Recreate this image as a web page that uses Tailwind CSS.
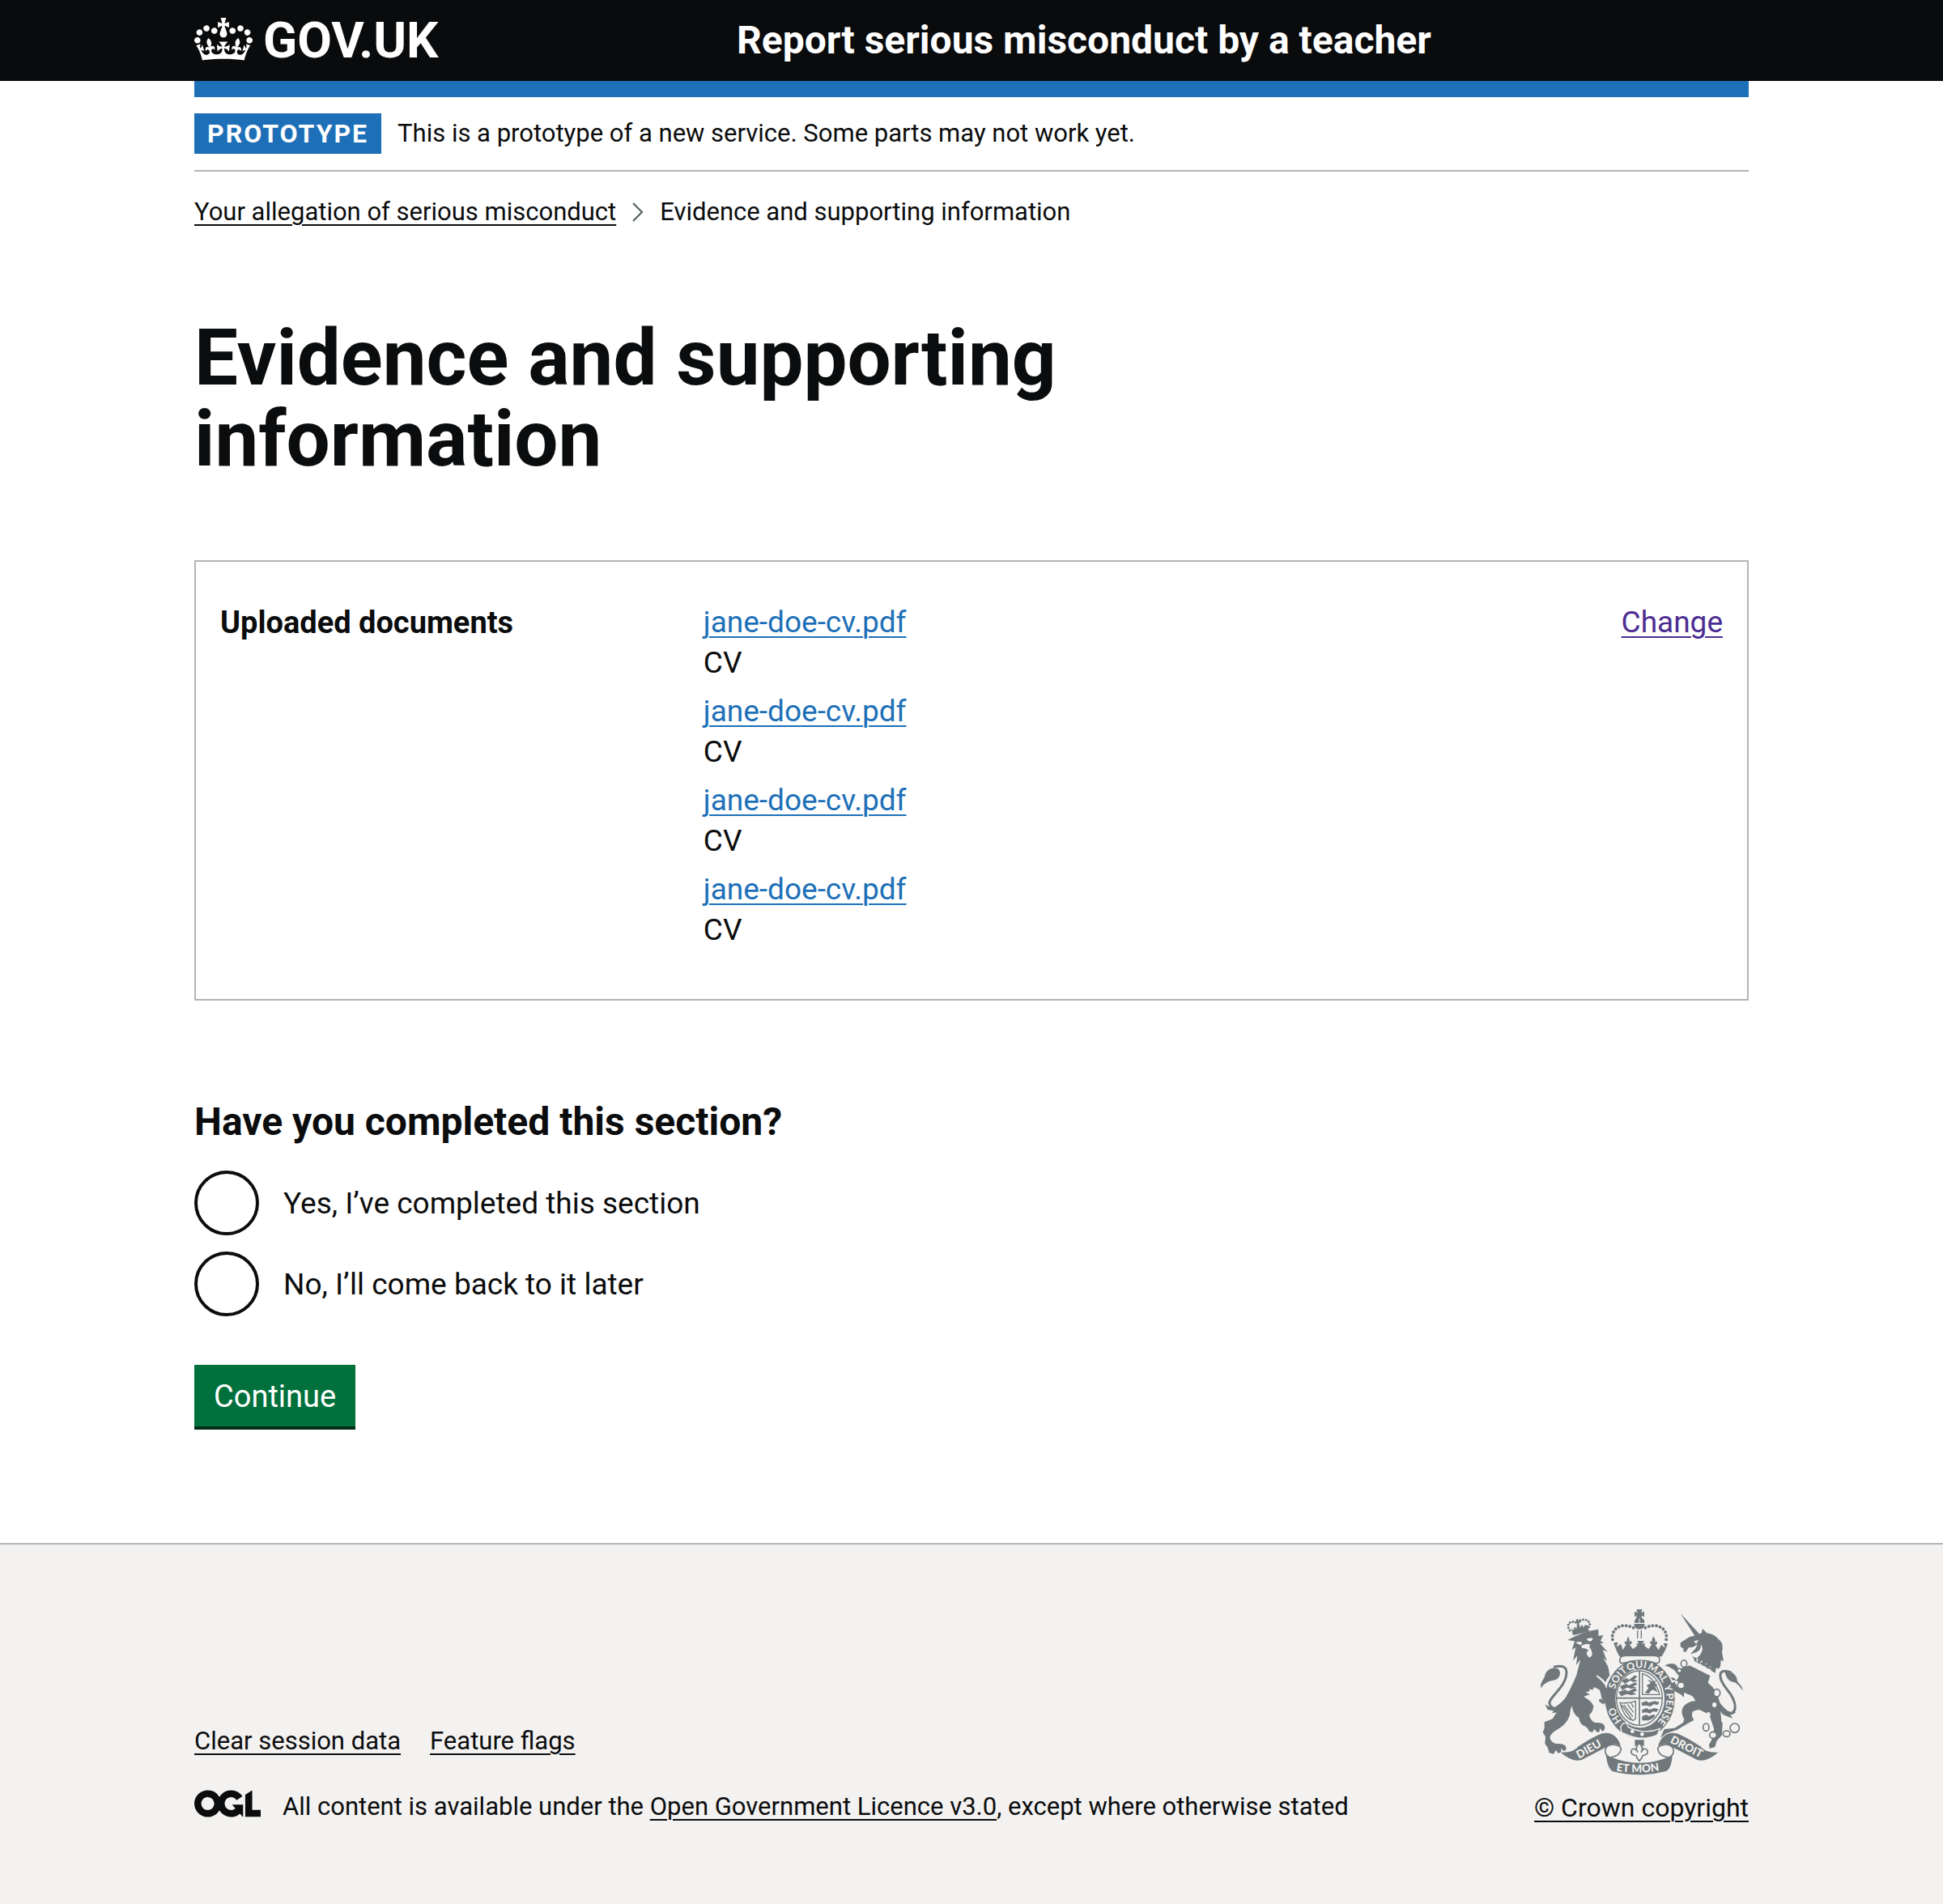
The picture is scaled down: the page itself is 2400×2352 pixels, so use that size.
<!DOCTYPE html>
<html lang="en">
<head>
<meta charset="utf-8">
<meta name="viewport" content="width=device-width, initial-scale=1">
<title>Evidence and supporting information</title>
<script src="https://cdn.jsdelivr.net/npm/@tailwindcss/browser@4"></script>
</head>
<body class="flex min-h-screen flex-col bg-white font-[Roboto,Arial,sans-serif] text-[31px] leading-[40px] text-[#0b0c0d]">

<header class="bg-[#0a0b0d] text-white">
  <div class="mx-auto flex h-[100px] w-full max-w-[1920px] items-center">
    <div class="w-1/3 shrink-0">
      <a href="#" class="flex w-fit items-center gap-[13px] text-[62px] leading-[60px] font-bold" aria-label="GOV.UK">
        <svg class="mb-1 h-[53px] w-[72px]" viewBox="0 0 132 97" fill="currentColor" aria-hidden="true">
          <path fill-rule="evenodd" d="M25 30.2c3.5 1.5 7.7-.2 9.1-3.7 1.5-3.6-.2-7.8-3.9-9.2-3.6-1.4-7.6.3-9.1 3.9-1.4 3.5.3 7.5 3.9 9zM9 39.5c3.6 1.5 7.8-.2 9.2-3.7 1.5-3.6-.2-7.8-3.9-9.1-3.6-1.5-7.6.2-9.1 3.8-1.4 3.5.3 7.5 3.8 9zM4.4 57.2c3.5 1.5 7.7-.2 9.1-3.8 1.5-3.6-.2-7.7-3.9-9.1-3.5-1.5-7.6.3-9.1 3.8-1.4 3.5.3 7.6 3.9 9.1zm38.3-21.4c3.5 1.5 7.7-.2 9.1-3.8 1.5-3.6-.2-7.7-3.9-9.1-3.6-1.5-7.6.3-9.1 3.8-1.3 3.6.4 7.7 3.9 9.1zm64.4-5.6c-3.6 1.5-7.8-.2-9.1-3.7-1.5-3.6.2-7.8 3.8-9.2 3.6-1.4 7.7.3 9.2 3.9 1.3 3.5-.4 7.5-3.9 9zm15.9 9.3c-3.6 1.5-7.7-.2-9.1-3.7-1.5-3.6.2-7.8 3.7-9.1 3.6-1.5 7.7.2 9.2 3.8 1.5 3.5-.3 7.5-3.8 9zm4.7 17.7c-3.6 1.5-7.8-.2-9.2-3.8-1.5-3.6.2-7.7 3.9-9.1 3.6-1.5 7.7.3 9.2 3.8 1.3 3.5-.4 7.6-3.9 9.1zM89.3 35.8c-3.6 1.5-7.8-.2-9.2-3.8-1.4-3.6.2-7.7 3.9-9.1 3.6-1.5 7.7.3 9.2 3.8 1.4 3.6-.3 7.7-3.9 9.1zM69.7 17.7l8.9 4.7V9.3l-8.9 2.8c-.2-.3-.5-.6-.9-.9L72.4 0H59.6l3.5 11.2c-.3.3-.6.5-.9.9l-8.8-2.8v13.1l8.8-4.7c.3.3.6.7.9.9l-5 15.4v.1c-.2.8-.4 1.6-.4 2.4 0 4.1 3.1 7.5 7 8.1h.2c.3 0 .7.1 1 .1.4 0 .7 0 1-.1h.2c4-.6 7.1-4.1 7.1-8.1 0-.8-.1-1.7-.4-2.4V34l-5.1-15.4c.4-.2.7-.6 1-.9zM66 92.8c16.9 0 32.8 1.1 47.1 3.2 4-16.9 8.9-26.7 14-33.5l-9.6-3.4c1 4.9 1.1 7.2 0 10.2-1.5-1.4-3-4.3-4.2-8.7L108.6 76c2.8-2 5-3.2 7.5-3.3-4.4 9.4-10 11.9-13.6 11.2-4.3-.8-6.3-4.6-5.6-7.9 1-4.7 5.7-5.9 8-.5 4.3-8.7-3-11.4-7.6-8.8 7.1-7.2 7.9-13.5 2.1-21.1-8 6.1-8.1 12.3-4.5 20.8-4.7-5.4-12.1-2.5-9.5 6.2 3.4-5.2 7.9-2 7.2 3.1-.6 4.3-6.4 7.8-13.5 7.2-10.3-.9-10.9-8-11.2-13.8 2.5-.5 7.1 1.8 11 7.3L80.2 60c-4.1 4.4-8 5.3-12.3 5.4 1.4-4.4 8-11.6 8-11.6H55.5s6.4 7.2 7.9 11.6c-4.2-.1-8-1-12.3-5.4l1.4 16.4c3.9-5.5 8.5-7.7 10.9-7.3-.3 5.8-.9 12.8-11.1 13.8-7.2.6-12.9-2.9-13.5-7.2-.7-5 3.8-8.3 7.1-3.1 2.7-8.7-4.6-11.6-9.4-6.2 3.7-8.5 3.6-14.7-4.6-20.8-5.8 7.6-5 13.9 2.2 21.1-4.7-2.6-11.9.1-7.7 8.8 2.3-5.5 7.1-4.2 8.1.5.7 3.3-1.3 7.1-5.7 7.9-3.5.7-9-1.8-13.5-11.2 2.5.1 4.7 1.3 7.5 3.3l-4.7-15.4c-1.2 4.4-2.7 7.2-4.3 8.7-1.1-3-.9-5.3 0-10.2l-9.5 3.4c5 6.9 9.9 16.7 14 33.5 14.8-2.1 30.8-3.2 47.7-3.2z"/>
        </svg>
        <span>GOV.UK</span>
      </a>
    </div>
    <a href="#" class="ml-[30px] text-[48px] leading-[60px] font-bold">Report serious misconduct by a teacher</a>
  </div>
</header>

<div class="mx-auto w-full max-w-[1920px]">
  <div class="h-5 bg-[#1d70b8]"></div>
  <div class="flex items-center gap-5 border-b-2 border-[#b1b4b6] py-5">
    <strong class="bg-[#1d70b8] px-4 py-[5px] text-[32px] font-bold tracking-[2px] text-white">PROTOTYPE</strong>
    <span>This is a prototype of a new service. Some parts may not work yet.</span>
  </div>
  <nav aria-label="Breadcrumb" class="mt-[30px]">
    <ol class="flex items-center gap-5">
      <li><a href="#" class="underline decoration-2 underline-offset-[5px]">Your allegation of serious misconduct</a></li>
      <li class="flex items-center gap-5">
        <svg class="h-6 w-[14px]" viewBox="0 0 14 24" fill="none" stroke="#505a5f" stroke-width="2" aria-hidden="true"><path d="M1 1l11 11L1 23"/></svg>
        <span>Evidence and supporting information</span>
      </li>
    </ol>
  </nav>
</div>

<main class="mx-auto w-full max-w-[1920px] pt-[110px] pb-[140px]">
  <h1 class="w-2/3 pr-[30px] text-[96px] leading-[100px] font-bold">Evidence and supporting information</h1>

  <dl class="mt-[100px] flex border-2 border-[#b1b4b6] px-[30px] pt-[50px] pb-[60px] text-[37px] leading-[50px]">
    <dt class="w-[30%] text-[38px] font-bold">Uploaded documents</dt>
    <dd class="ml-10 flex flex-1 flex-col gap-[10px]">
      <div><a href="#" class="text-[#1d70b8] underline decoration-2 underline-offset-[5px]">jane-doe-cv.pdf</a><p>CV</p></div>
      <div><a href="#" class="text-[#1d70b8] underline decoration-2 underline-offset-[5px]">jane-doe-cv.pdf</a><p>CV</p></div>
      <div><a href="#" class="text-[#1d70b8] underline decoration-2 underline-offset-[5px]">jane-doe-cv.pdf</a><p>CV</p></div>
      <div><a href="#" class="text-[#1d70b8] underline decoration-2 underline-offset-[5px]">jane-doe-cv.pdf</a><p>CV</p></div>
    </dd>
    <dd><a href="#" class="text-[#4c2c92] underline decoration-2 underline-offset-[5px]">Change</a></dd>
  </dl>

  <form class="mt-[120px]">
    <fieldset>
      <legend class="mb-[30px] text-[48px] leading-[60px] font-bold">Have you completed this section?</legend>
      <div class="flex flex-col gap-5 text-[37px] leading-[50px]">
        <div class="flex items-center">
          <input id="done-yes" name="done" type="radio" class="size-20 appearance-none rounded-full border-4 border-[#0b0c0d] bg-white checked:bg-[#0b0c0d] checked:shadow-[inset_0_0_0_16px_white]">
          <label for="done-yes" class="pt-0.5 pl-[30px]">Yes, I’ve completed this section</label>
        </div>
        <div class="flex items-center">
          <input id="done-no" name="done" type="radio" class="size-20 appearance-none rounded-full border-4 border-[#0b0c0d] bg-white checked:bg-[#0b0c0d] checked:shadow-[inset_0_0_0_16px_white]">
          <label for="done-no" class="pt-0.5 pl-[30px]">No, I’ll come back to it later</label>
        </div>
      </div>
    </fieldset>
    <button type="submit" class="mt-[60px] h-20 border-b-4 border-[#002d18] bg-[#00703c] px-6 pt-0.5 text-[38px] leading-[50px] text-white">Continue</button>
  </form>
</main>

<footer class="grow border-t-2 border-[#b1b4b6] bg-[#f3f2f1] pt-[78px] pb-20">
  <div class="mx-auto flex w-full max-w-[1920px] items-end justify-between">
    <div>
      <ul class="mb-10 flex gap-[36px]">
        <li><a href="#" class="underline decoration-2 underline-offset-[5px]">Clear session data</a></li>
        <li><a href="#" class="underline decoration-2 underline-offset-[5px]">Feature flags</a></li>
      </ul>
      <div class="flex items-center gap-[27px]">
        <svg class="mb-2 h-[34px] w-[82px]" viewBox="0 0 483.2 195.7" fill="currentColor" role="img" aria-label="OGL">
          <path d="M421.5 142.8V.1l-50.7 32.3v161.1h112.4v-50.7zm-122.3-9.6A47.12 47.12 0 0 1 221 97.8c0-26 21.1-47.1 47.1-47.1 16.7 0 31.4 8.7 39.7 21.8l42.7-27.2A97.63 97.63 0 0 0 268.1 0c-36.5 0-68.3 20.1-85.1 49.7A98 98 0 0 0 97.8 0C43.9 0 0 43.9 0 97.8s43.9 97.8 97.8 97.8c36.5 0 68.3-20.1 85.1-49.7a97.76 97.76 0 0 0 149.6 25.4l19.4 22.2h3v-87.8h-80l24.3 27.5zM97.8 145c-26 0-47.1-21.1-47.1-47.1s21.1-47.1 47.1-47.1 47.1 21.1 47.1 47.1S123.8 145 97.8 145"/>
        </svg>
        <p>All content is available under the <a href="#" class="underline decoration-2 underline-offset-[5px]">Open Government Licence v3.0</a>, except where otherwise stated</p>
      </div>
    </div>
    <a href="#" class="flex flex-col items-center gap-5 text-[32px]">
      <svg class="h-[207px] w-[252px]" viewBox="69 48 756 621" fill="#70787b" aria-hidden="true">
        <!-- crown -->
        <path d="M427 54h22l-4 13 11-5v20l-11-5 5 14h-26l5-14-9 5V62l11 5zM421 92q17-10 35 0l0 12h-36zM418 108h40q-2 20-20 20t-20-20z"/>
        <path d="M438 88v20" stroke="#f3f2f1" stroke-width="3"/>
        <path d="M429 132h4v30h-4zM443 132h4v30h-4z"/>
        <path d="M416 122C370 100 330 128 339 168M460 122C506 100 546 128 537 168" fill="none" stroke="#70787b" stroke-width="12" stroke-linecap="round" stroke-dasharray="0 14"/>
        <path d="M343 178l16-2-6 18 16-12 8 22 12-20q-12-6-2-12 4 0 6 5l-2-9 5-14 6 14-2 9q4-9 10-3 2 8-8 11l12 16 16-12-4-10 10 4-6-12h26l-8 12 12-4-4 10 16 12 12-17q-10-3-6-11 6-4 9 4l-3-9 6-15 7 15-3 9q5-8 9-2 4 8-6 11l12 19 10-20 14 12-6-18 16 2q-8 26-22 48H364q-12-22-21-48z"/>
        <!-- lion -->
        <path d="M180 132C166 112 178 94 204 102M251 120C262 104 244 84 214 96" fill="none" stroke="#70787b" stroke-width="9" stroke-linecap="round" stroke-dasharray="0 11"/>
        <path d="M186 124l8 8 4-14 7 8 2-22-9 2-1-6 8-2-2-7 8-1 2 7 8-2 1 6-8 3 4 18 6-12 7 10 6-8 12 2-2 20-56 14zM190 142l60-14 2 8-58 14z"/>
        <path d="M172 168q54-32 114-40l0 24 18-2-10 20 12 10-14 0 28 32-18-8 16 42-14-12 18 32q4 20 6 34-14 12-18 36l26 26 10 46-4 14-14 4-8-4-14-16q-20-6-22-24l-8-10q-28-4-44 6 32 18 36 36-2 20-16 32 6 22 22 28 32-2 36 14l-2 14-8 4-8-12-2 14-8 2-12-12-6 12-12-4q-6-14-14-18-20-4-24-32-22-12-26-44-8 14-8 34-10 30-38 48-36 20-36 36 6 22 30 22 26 0 30 12l0 12-10 2-8-10 0 14-10 6-10-12-8 14-16-4-6-20-10-14 2-26-10-16 6-16 0-22 30-12q20-30 34-54 34-56 54-106l16-60-16 20 4-34-16 18 10-48-14 8 10-32z"/>
        <path d="M202 178q14-8 24 0-2 12-12 6zM242 164q14-8 24-2-6 16-18 8zM222 190q14-12 34-6l-4 8q20 30 4 40-12 0-14-18l8-8q-10-10-24-8z" fill="#f3f2f1"/>
        <path d="M240 360l14-2-2-8 14 2 4-10 12 6q22 10 20 20l6 8-4 18-12-10-6 12q-20-16-46-36zM282 298q40 26 60 72l-8 6q-18-46-56-74z" fill="#f3f2f1"/>
        <path d="M126 424C60 394 168 360 168 286 166 262 146 262 120 268" fill="none" stroke="#70787b" stroke-width="9"/>
        <path d="M72 346c-2-24 14-32 16-48 8-26 34-30 48-24 16 14 6 36-10 42-22 4-34 6-54 30zM88 406q14 12 36 10 20-8 54-50 0 26-20 44l8 4-22 14-6 8-24 2 6-8-22-4z"/>
        <!-- unicorn -->
        <path d="M590 69l72 78-16 10zM652 150l16-8 4-16 16 16q28 4 40 20 20 14 18 36l-2 16 6 32-10-4-2 24-8 10q-44-16-84-44-20-12-16-16l14-14 10-18-18 10-16 2-10 16-10-2 2-10-12-8 0-14 34-22z"/>
        <path d="M640 172l18-4-10 14zM632 218q36-4 34-34 14 20-8 44 -10 14-26 6z" fill="#f3f2f1"/>
        <path d="M630 226l8 26 84 44 4-24" stroke="#f3f2f1" stroke-width="8" fill="#70787b"/>
        <path d="M636 246l0-16 8 16 10-12 2 22 14-13 4 22 14-12 0 22 16-12 0 24z" fill="#f3f2f1"/>
        <path d="M640 244l6-8 6 12 10-8 2 14 12-8 4 14 12-6 2 16 12-4-2 12z"/>
        <path d="M624 262l76 38-8 26q34 26 44 74l6 70 4 4-2 46-20 22-6 22-20 6-2-14 16-30 2-30-16-48q-10-10-38-22-22 2-26 10-4 16 6 28l-24 14-38 22-40 14-22 16 14-32 38-4 32-20 4-12q-20-36 6-56 20-14 36-12-8-22-30-26-14-4-30-26-2-16-6-22l-18-4-22 12-16-12 20-12 22 4 10 10q12-20 18-46z"/>
        <path d="M760 440C800 450 806 402 762 350 730 310 724 268 778 288" fill="none" stroke="#70787b" stroke-width="9"/>
        <path d="M821 356c-2-26-22-26-22-46-10-28-36-30-44-24 4 22 14 36 34 38 12 4 20 14 32 32zM734 398q16 20 30 32 16 8 34 4l-16 10-8 0 10 14-22-8-14-6-14-18z"/>
        <g fill="#f3f2f1"><ellipse cx="716" cy="408" rx="8" ry="9"/><ellipse cx="694" cy="444" rx="7" ry="9"/></g>
        <!-- garter and shield -->
        <ellipse cx="440" cy="385" rx="134" ry="153" fill="#f3f2f1"/>
        <ellipse cx="440" cy="385" rx="110" ry="127" fill="none" stroke="#70787b" stroke-width="38"/>
        <ellipse cx="438" cy="383" rx="85" ry="101" fill="none" stroke="#70787b" stroke-width="4"/>
        <path d="M370 228q-12 26 6 26 62-22 124 0 18 0 10-26" fill="#f3f2f1" stroke="#70787b" stroke-width="5"/>
        <path d="M362 206q76-10 154 0l-6 26q-71-20-141 0z"/>
        <path d="M438 282v203M352 383h172" stroke="#70787b" stroke-width="5"/>
        <path d="M372 318l20-10 6 8 24-18 8 6-12 10 14 4-16 6-12-6-20 12zM366 338l24-8 8 6 26-12 6 8-16 8 14 4-20 4-16-4-18 10zM360 360l26-8 10 6 26-12 8 8-16 8 14 6-20 4-16-4-22 8zM446 400l18-6 8 6 22-6 18 4-6 10-16-2-10 8-18-4-14 2zM448 426l18-6 8 6 20-6 14 4-6 10-14-2-10 8-16-4-14 2zM448 450l16-6 8 6 18-6 8 4-10 10-16 8-24 0z"/>
        <path d="M449 292q46 14 64 78h-64z" fill="none" stroke="#70787b" stroke-width="4"/>
        <path d="M458 364l14-18-8-10 16-8-12-14 18 8 14-4-6 12 12 2-10 8 10 22-16-10-10 4-6 10z"/>
        <path d="M366 400q34 4 58-6l0 64-8 8q-24-6-34-26-10-16-16-40zM380 408l34 44M394 406l22 30M372 408l36 52M408 402l8 16" fill="none" stroke="#70787b" stroke-width="4"/>
        <path d="M368 490l10-14 14 0 4 14q60 30 118 6l-10 24q-60 26-122-6l-10-4z" stroke="#f3f2f1" stroke-width="4"/>
        <circle cx="412" cy="506" r="7" fill="#f3f2f1"/><circle cx="448" cy="517" r="7" fill="#f3f2f1"/>
        <path id="garter" d="M378 472A97 114 0 0 1 440 271A97 114 0 0 1 509 466" fill="none"/>
        <g fill="#f3f2f1" font-family="Lato, sans-serif" font-weight="700" font-size="37">
          <text><textPath href="#garter" startOffset="7">HO</textPath></text>
          <text><textPath href="#garter" startOffset="130">SOIT</textPath></text>
          <text><textPath href="#garter" startOffset="215">QUI</textPath></text>
          <text><textPath href="#garter" startOffset="288">MAL</textPath></text>
          <text><textPath href="#garter" startOffset="379">Y</textPath></text>
          <text><textPath href="#garter" startOffset="408">PENSE</textPath></text>
        </g>
        <!-- lion's paw and unicorn's forelegs, over the garter -->
        <path d="M284 322q36 20 46 46l14 22-2 18-12-6-2 12-12-4-8-10-8-10z"/>
        <path d="M606 344l-28-2-10-20-16 10 14 24 26 14 10 10 2-16zM532 262q30-14 44 0l8 16 18-4 2 26-16 4q-14-14-20-24l-20-12z"/>
        <g fill="#f3f2f1" stroke="#70787b" stroke-width="5"><ellipse cx="603" cy="255" rx="11" ry="13"/><ellipse cx="592" cy="336" rx="13" ry="12"/><ellipse cx="586" cy="281" rx="8" ry="8"/><ellipse cx="725" cy="364" rx="12" ry="14"/><ellipse cx="685" cy="491" rx="11" ry="14"/><ellipse cx="711" cy="520" rx="13" ry="12"/><ellipse cx="761" cy="515" rx="13" ry="11"/><circle cx="791" cy="494" r="17"/></g>
        <!-- plant badge -->
        <path d="M421 538h34v24q-16-12-34 0z"/>
        <path d="M438 550q18 18 6 34 10-20 22-10 8 14-8 20l-8 2-4 10-8 10-8-10-4-10-8-2q-16-6-8-20 12-10 22 10-12-16 4-34z" fill="#f3f2f1" stroke="#70787b" stroke-width="5"/>
        <!-- motto ribbon -->
        <path d="M146 584Q196 586 212 562 270 524 300 514 350 504 369 560 340 545 324 560L224 612Q190 622 146 584zM730 584Q680 586 664 562 606 524 576 514 526 504 507 560 536 545 552 560L652 612Q686 622 730 584zM312 570q2 22 22 32 106 42 210 0 18-10 18-32-2 76-26 84-100 26-198 0-22-14-26-84z"/>
        <path d="M330 604q-22-10-18-32 8-20 36-16 22 4 22 16-4 24-34 30zM546 604q22-10 18-32-8-20-36-16-22 4-22 16 4 24 34 30z" fill="#f3f2f1" stroke="#70787b" stroke-width="5"/>
        <path id="dieu" d="M214 608L340 538" fill="none"/>
        <path id="droit" d="M550 547L690 618" fill="none"/>
        <path id="etmon" d="M352 652Q438 667 532 648" fill="none"/>
        <g fill="#f3f2f1" font-family="Lato, sans-serif" font-weight="900" font-size="41">
          <text><textPath href="#dieu">DIEU</textPath></text>
          <text><textPath href="#droit">DROIT</textPath></text>
          <text><textPath href="#etmon">ET MON</textPath></text>
        </g>
      </svg>
      <span class="underline decoration-2 underline-offset-[5px]">© Crown copyright</span>
    </a>
  </div>
</footer>
</body>
</html>
